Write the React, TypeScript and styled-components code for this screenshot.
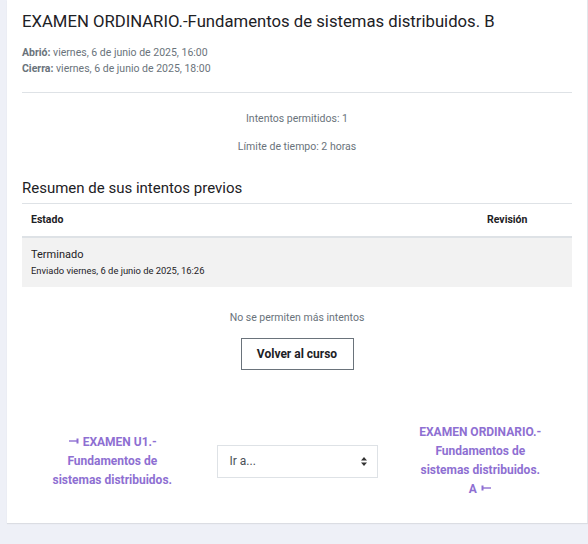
import React from "react";
import styled, { createGlobalStyle } from "styled-components";

const Global = createGlobalStyle`
  html, body { margin: 0; padding: 0; background: #eef0f7; }
  body { font-family: Roboto, "Liberation Sans", sans-serif; }
  * { box-sizing: border-box; }
`;

const Page = styled.div`
  padding: 0 0 22px 7px;
`;

const Card = styled.div`
  background: #fff;
  border-right: 1px solid #e3e5ea;
  box-shadow: 0 1px 1px rgba(0, 0, 0, 0.08);
  padding: 10px 15px 24px 15px;
`;

const Title = styled.h1`
  margin: 0;
  font-size: 16.7px;
  font-weight: 400;
  color: #1d2125;
  line-height: 24px;
`;

const Dates = styled.div`
  margin-top: 11px;
  font-size: 10.5px;
  line-height: 16px;
  color: #6a737b;
  b { font-weight: 700; }
`;

const Rule = styled.hr`
  border: 0;
  border-top: 1px solid #dee2e6;
  margin: 15px 0 0 0;
`;

const Info = styled.p<{ $top: number }>`
  margin: 0;
  text-align: center;
  font-size: 10.5px;
  line-height: 16px;
  color: #6a737b;
  margin-top: ${(p) => p.$top}px;
`;

const Heading = styled.h3`
  margin: 23px 0 0 0;
  font-size: 15px;
  font-weight: 400;
  color: #1d2125;
  line-height: 20px;
`;

const Table = styled.div`
  margin-top: 5px;
  border-top: 1px solid #dee2e6;
`;

const Row = styled.div<{ $head?: boolean; $shade?: boolean }>`
  display: grid;
  grid-template-columns: 1fr 94px;
  background: ${(p) => (p.$shade ? "#f2f2f2" : "transparent")};
  border-bottom: ${(p) => (p.$head ? "2px solid #dee2e6" : "0")};
  padding: ${(p) => (p.$head ? "8px 0 8px 0" : "9px 0 8px 0")};
`;

const HeadCell = styled.div`
  padding-left: 9px;
  font-size: 10.5px;
  font-weight: 700;
  color: #1d2125;
  line-height: 16px;
`;

const Cell = styled.div`
  padding-left: 9px;
  color: #1d2125;
`;

const State = styled.div`
  font-size: 11px;
  line-height: 16px;
`;

const Sub = styled.div`
  font-size: 9.4px;
  line-height: 16px;
`;

const Center = styled.div`
  display: flex;
  justify-content: center;
  margin-top: 12px;
`;

const Button = styled.button`
  font-family: inherit;
  background: #fff;
  border: 1px solid #6a737b;
  color: #1d2125;
  font-size: 12px;
  font-weight: 700;
  width: 113px;
  height: 32px;
  padding: 0;
`;

const Nav = styled.div`
  display: grid;
  grid-template-columns: 1fr 161px 1fr;
  align-items: center;
  margin-top: 53px;
`;

const NavLink = styled.a<{ $l: number; $r: number }>`
  text-align: center;
  color: #8e6fd2;
  font-size: 12px;
  font-weight: 700;
  line-height: 19px;
  text-decoration: none;
  padding: 0 ${(p) => p.$r}px 0 ${(p) => p.$l}px;
`;

const Tack = styled.svg`
  width: 10px;
  height: 6px;
  vertical-align: 2px;
  margin: 0 1px;
`;

const Select = styled.div`
  height: 33px;
  border: 1px solid #dee2e6;
  display: flex;
  align-items: center;
  justify-content: space-between;
  padding: 0 10px 0 12px;
  font-size: 12px;
  color: #495057;
`;

const Arrows = styled.svg`
  width: 6px;
  height: 9px;
`;

function LeftTack() {
  return (
    <Tack viewBox="0 0 10 6">
      <path d="M0 3 H8.5" stroke="#8e6fd2" strokeWidth="1.4" />
      <path d="M8.5 0.5 V5.5" stroke="#8e6fd2" strokeWidth="2" />
    </Tack>
  );
}

function RightTack() {
  return (
    <Tack viewBox="0 0 10 6">
      <path d="M1.5 3 H10" stroke="#8e6fd2" strokeWidth="1.4" />
      <path d="M1.5 0.5 V5.5" stroke="#8e6fd2" strokeWidth="2" />
    </Tack>
  );
}

export default function App() {
  return (
    <>
      <Global />
      <Page>
        <Card>
          <Title>EXAMEN ORDINARIO.-Fundamentos de sistemas distribuidos. B</Title>
          <Dates>
            <div><b>Abrió:</b> viernes, 6 de junio de 2025, 16:00</div>
            <div><b>Cierra:</b> viernes, 6 de junio de 2025, 18:00</div>
          </Dates>
          <Rule />
          <Info $top={18}>Intentos permitidos: 1</Info>
          <Info $top={12}>Límite de tiempo: 2 horas</Info>
          <Heading>Resumen de sus intentos previos</Heading>
          <Table>
            <Row $head>
              <HeadCell>Estado</HeadCell>
              <HeadCell>Revisión</HeadCell>
            </Row>
            <Row $shade>
              <Cell>
                <State>Terminado</State>
                <Sub>Enviado viernes, 6 de junio de 2025, 16:26</Sub>
              </Cell>
              <Cell />
            </Row>
          </Table>
          <Info $top={23}>No se permiten más intentos</Info>
          <Center>
            <Button>Volver al curso</Button>
          </Center>
          <Nav>
            <NavLink $l={27} $r={41} href="#">
              <LeftTack /> EXAMEN U1.- Fundamentos de sistemas distribuidos.
            </NavLink>
            <Select>
              <span>Ir a...</span>
              <Arrows viewBox="0 0 6 9">
                <path d="M3 0 L6 3.5 L0 3.5 Z M3 9 L6 5.5 L0 5.5 Z" fill="#333" />
              </Arrows>
            </Select>
            <NavLink $l={40} $r={29} href="#">
              EXAMEN ORDINARIO.- Fundamentos de sistemas distribuidos. A{"\u00a0"}
              <RightTack />
            </NavLink>
          </Nav>
        </Card>
      </Page>
    </>
  );
}
